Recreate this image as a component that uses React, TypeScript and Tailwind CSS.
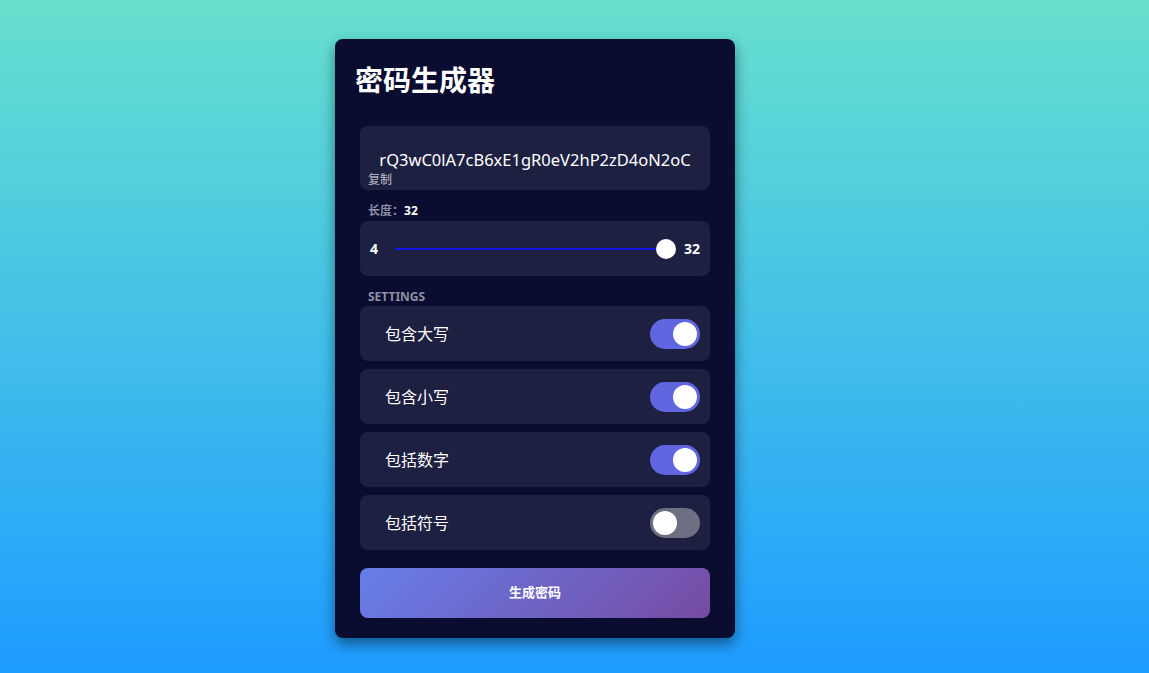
import React, { useState } from "react";

const Toggle = ({ on, onClick }: { on: boolean; onClick: () => void }) => (
  <button
    onClick={onClick}
    className={`relative w-[50px] h-[30px] rounded-full ${on ? "bg-[#5f66e0]" : "bg-[#6d7083]"}`}
  >
    <span
      className={`absolute top-[3px] w-[24px] h-[24px] rounded-full bg-white ${on ? "left-[23px]" : "left-[3px]"}`}
    />
  </button>
);

const App = () => {
  const [opts, setOpts] = useState([
    { label: "包含大写", on: true },
    { label: "包含小写", on: true },
    { label: "包括数字", on: true },
    { label: "包括符号", on: false },
  ]);

  const flip = (i: number) =>
    setOpts(opts.map((o, j) => (j === i ? { ...o, on: !o.on } : o)));

  return (
    <div
      className="min-h-screen w-full bg-gradient-to-b from-[#67e0cd] to-[#1e9bff] flex pl-[335px] pt-[39px] pb-[35px]"
      style={{ fontFamily: '"Noto Sans", "Noto Sans CJK SC", sans-serif' }}
    >
      <div className="w-[400px] h-[599px] bg-[#0a0c30] rounded-lg shadow-[0_6px_14px_rgba(0,0,0,0.45)] px-5 pt-5">
        <h1 className="text-[28px] leading-[42px] font-bold text-white">密码生成器</h1>

        <div className="mx-[5px]">
          <div className="mt-[25px] bg-[#1e2042] rounded-lg pt-[22px] pb-[4px] px-2">
            <div className="text-center text-[16.5px] leading-[24px] text-white">
              rQ3wC0lA7cB6xE1gR0eV2hP2zD4oN2oC
            </div>
            <button className="block mt-[1px] text-[12px] leading-[13px] font-medium text-[#a9aab8]">复制</button>
          </div>

          <div className="mt-[13px] mb-[2px] px-2 text-[12px] leading-[16px] font-bold text-[#8d8fa3]">
            长度：<span className="text-white">32</span>
          </div>
          <div className="h-[55px] bg-[#1e2042] rounded-lg flex items-center px-[10px]">
            <span className="text-[14px] font-bold text-white">4</span>
            <div className="relative flex-1 h-[20px] ml-[17px] mr-2">
              <div className="absolute left-0 right-[10px] top-[9px] h-[2px] bg-[#1515e8]" />
              <div className="absolute right-0 top-0 w-[20px] h-[20px] rounded-full bg-white" />
            </div>
            <span className="text-[14px] font-bold text-white">32</span>
          </div>

          <div className="mt-[14px] mb-[2px] px-2 text-[12px] leading-[14px] font-bold text-[#8d8fa3]">
            SETTINGS
          </div>
          <div className="flex flex-col gap-2">
            {opts.map((o, i) => (
              <div
                key={i}
                className="h-[55px] bg-[#1e2042] rounded-lg flex items-center justify-between pl-[25px] pr-[10px]"
              >
                <span className="text-[16px] text-white">{o.label}</span>
                <Toggle on={o.on} onClick={() => flip(i)} />
              </div>
            ))}
          </div>

          <button className="mt-[18px] w-full h-[50px] rounded-lg bg-[linear-gradient(135deg,#667eea,#764ba2)] text-white text-[13px] font-bold">
            生成密码
          </button>
        </div>
      </div>
    </div>
  );
};

export default App;
